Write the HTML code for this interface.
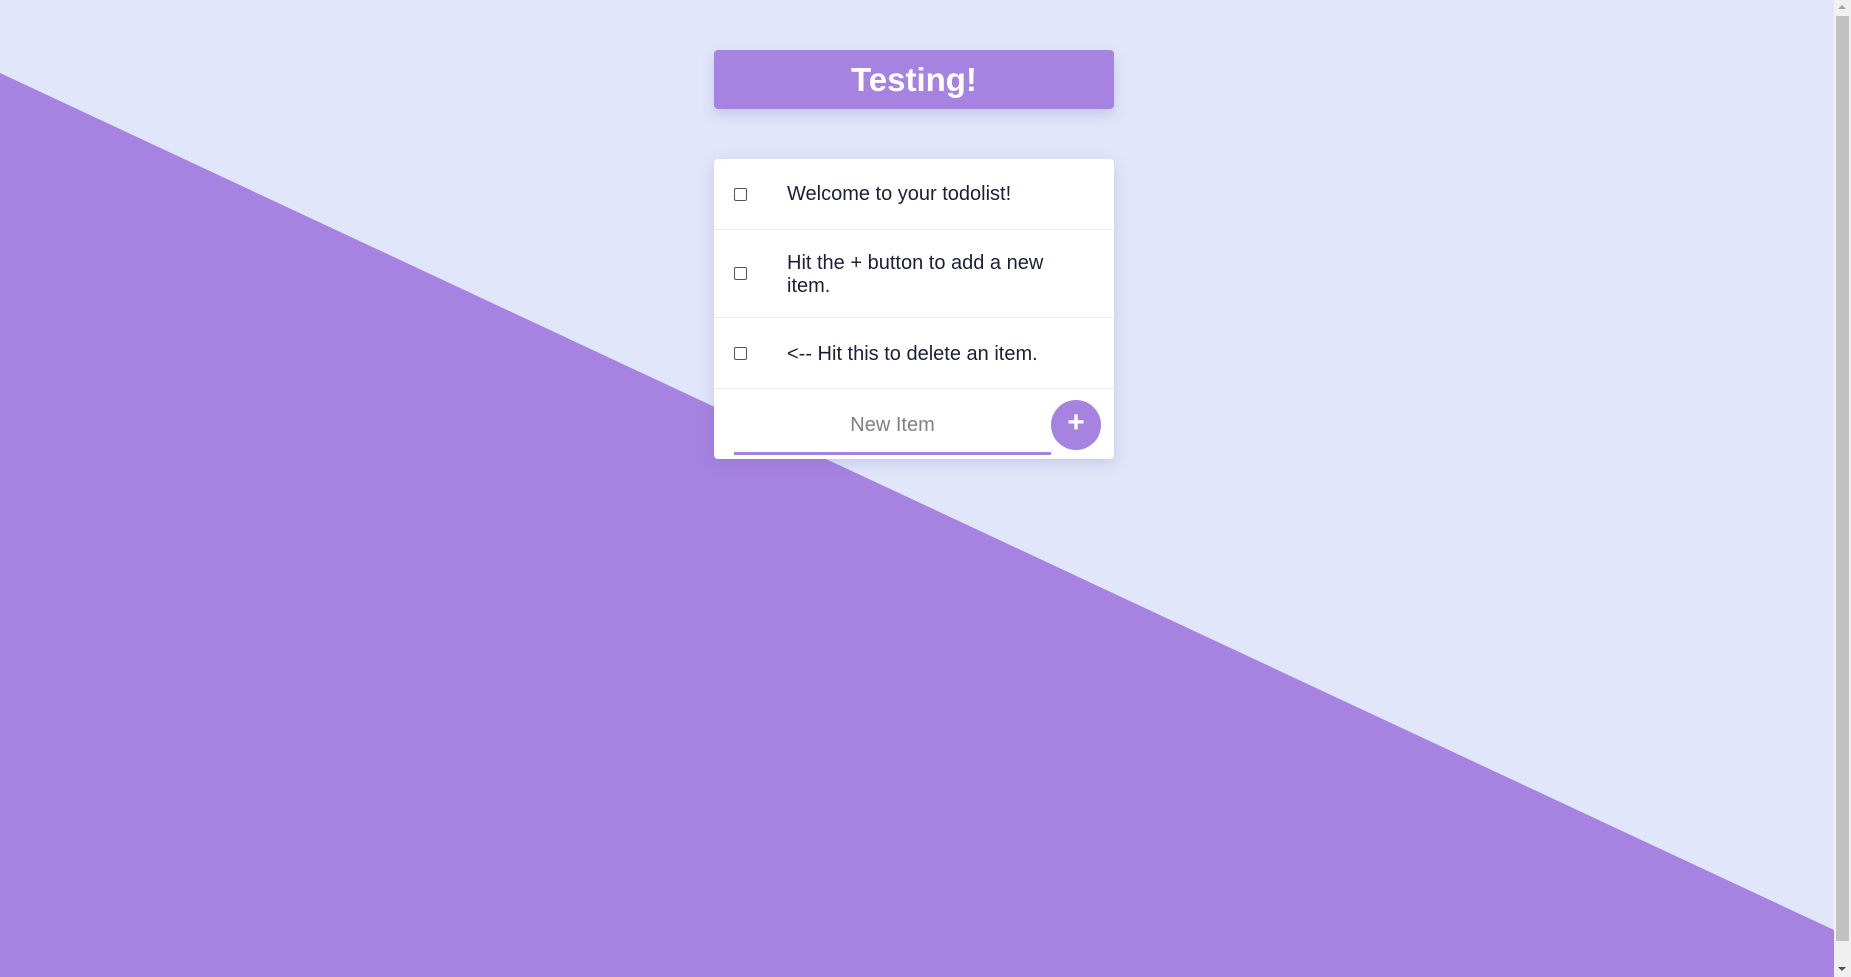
<!DOCTYPE html>
<html><head><style>
html,body{margin:0;padding:0;width:1851px;height:977px;overflow:hidden;background:#e1e6fa;font-family:"Liberation Sans",sans-serif}
#bg{position:absolute;left:0;top:0}
.sb{position:absolute;left:1834px;top:0;width:17px;height:977px;background:#f0f0f0}
.thumb{position:absolute;left:1836px;top:16px;width:13px;height:925px;background:#c1c1c1}
.au{position:absolute;left:1838px;top:5px;width:0;height:0;border-left:4px solid transparent;border-right:4px solid transparent;border-bottom:4px solid #a3a3a3}
.ad{position:absolute;left:1838px;top:967px;width:0;height:0;border-left:4px solid transparent;border-right:4px solid transparent;border-top:4px solid #505050}
.title{position:absolute;left:714px;top:50px;width:400px;height:59px;background:#a682e1;border-radius:4px;box-shadow:0 6px 12px rgba(120,110,180,.25);color:#fff;font-weight:bold;font-size:33px;text-align:center;line-height:59px}
.card{position:absolute;left:714px;top:159px;width:400px;height:300px;background:#fff;border-radius:4px;box-shadow:0 4px 14px rgba(120,110,180,.25)}
.row{position:absolute;left:0;width:400px;border-bottom:1px solid #ebebeb}
.cb{position:absolute;left:20px;width:11px;height:11px;border:1px solid #555;border-radius:2px;background:#fff}
.txt{position:absolute;left:73px;font-size:20px;color:#1a1f3a;line-height:23px;width:290px}
.ul{position:absolute;left:20px;top:293px;width:317px;height:3px;background:#a682e1}
.ph{position:absolute;left:20px;width:317px;top:255px;text-align:center;font-size:20px;color:#808080}
.btn{position:absolute;left:337px;top:241px;width:50px;height:50px;border-radius:50%;background:#a682e1;color:#fff;font-size:30px;font-weight:bold;text-align:center;line-height:46px}
</style></head><body>
<svg id="bg" width="1834" height="977"><polygon points="0,73 1834,930 1834,977 0,977" fill="#a682e1"/></svg>
<div class="sb"></div><div class="thumb"></div><div class="au"></div><div class="ad"></div>
<div class="title">Testing!</div>
<div class="card">
<div class="row" style="top:0;height:70px"><div class="cb" style="top:29px"></div><div class="txt" style="top:24px">Welcome to your todolist!</div></div>
<div class="row" style="top:70px;height:88px"><div class="cb" style="top:38px"></div><div class="txt" style="top:23px">Hit the + button to add a new item.</div></div>
<div class="row" style="top:159px;height:70px"><div class="cb" style="top:29px"></div><div class="txt" style="top:25px">&lt;-- Hit this to delete an item.</div></div>
<div class="ph">New Item</div>
<div class="ul"></div>
<div class="btn">+</div>
</div>
</body></html>
